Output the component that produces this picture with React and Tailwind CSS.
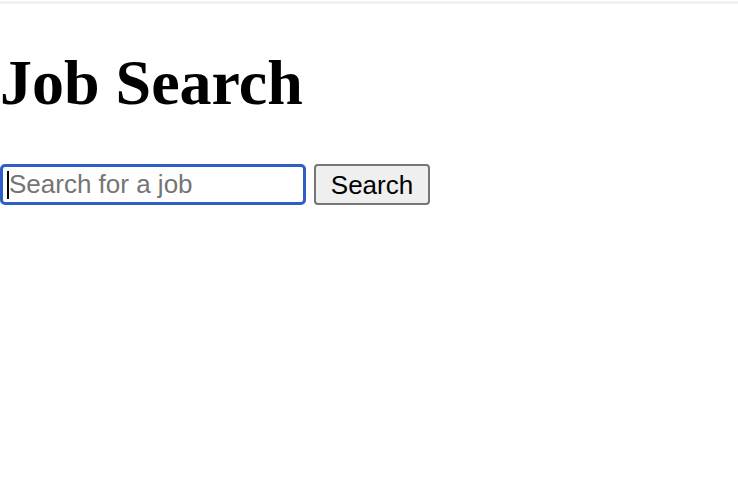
const App = () => {
  return (
    <div className="min-h-screen bg-white">
      <div className="pt-px">
        <div className="h-[3px] bg-[#f2f2f2]" />
      </div>
      <h1 className="mt-[42px] font-['Liberation_Serif',serif] text-[64px] font-bold leading-[74px] text-black">
        Job Search
      </h1>
      <div className="mt-[44px] flex items-center gap-[8px]">
        <div className="relative">
          <input
            type="text"
            placeholder="Search for a job"
            className="h-[41px] w-[306px] rounded-[5px] border-[3px] border-[#2f5fc6] bg-white px-[6px] font-['Liberation_Sans',sans-serif] text-[26px] text-black outline-none placeholder:text-[#757575]"
          />
          <span className="absolute left-[7px] top-[7px] h-[28px] w-[2px] bg-black" />
        </div>
        <button className="h-[41px] w-[116px] rounded-[4px] border-2 border-[#767676] bg-[#efefef] font-['Liberation_Sans',sans-serif] text-[26px] text-black">
          Search
        </button>
      </div>
    </div>
  );
};

export default App;
